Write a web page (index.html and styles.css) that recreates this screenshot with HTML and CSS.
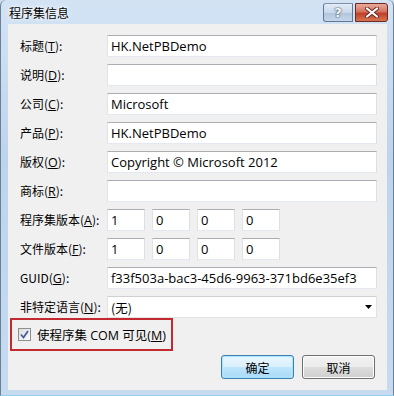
FILE: index.html
```html
<!DOCTYPE html>
<html lang="zh-CN">

<head>
    <meta charset="UTF-8">
    <meta name="viewport" content="width=device-width, initial-scale=1.0">
    <title>程序集信息</title>
    <link rel="stylesheet" href="styles.css">
</head>

<body>
    <div class="window">
        <!-- Title bar -->
        <div class="titlebar">
            <span class="title">程序集信息</span>
            <div class="caption-buttons">
                <span class="cap-btn help">?</span>
                <span class="cap-btn close">
                    <svg width="14" height="11" viewBox="0 0 14 11">
                        <path d="M2 1.5 L12 9.5 M12 1.5 L2 9.5" stroke="#6b2a22" stroke-width="4" stroke-linecap="round" />
                        <path d="M2 1.5 L12 9.5 M12 1.5 L2 9.5" stroke="#ffffff" stroke-width="2.2" stroke-linecap="round" />
                    </svg>
                </span>
            </div>
        </div>

        <!-- Dialog body -->
        <div class="client">
            <div class="form">
                <label>标题(<u>T</u>):</label>
                <div class="textbox">HK.NetPBDemo</div>

                <label>说明(<u>D</u>):</label>
                <div class="textbox"></div>

                <label>公司(<u>C</u>):</label>
                <div class="textbox">Microsoft</div>

                <label>产品(<u>P</u>):</label>
                <div class="textbox">HK.NetPBDemo</div>

                <label>版权(<u>O</u>):</label>
                <div class="textbox">Copyright © Microsoft 2012</div>

                <label>商标(<u>R</u>):</label>
                <div class="textbox"></div>

                <label>程序集版本(<u>A</u>):</label>
                <div class="version">
                    <div class="textbox">1</div>
                    <div class="textbox">0</div>
                    <div class="textbox">0</div>
                    <div class="textbox">0</div>
                </div>

                <label>文件版本(<u>F</u>):</label>
                <div class="version">
                    <div class="textbox">1</div>
                    <div class="textbox">0</div>
                    <div class="textbox">0</div>
                    <div class="textbox">0</div>
                </div>

                <label>GUID(<u>G</u>):</label>
                <div class="textbox">f33f503a-bac3-45d6-9963-371bd6e35ef3</div>

                <label>非特定语言(<u>N</u>):</label>
                <div class="combo">
                    <span>(无)</span>
                    <svg width="7" height="4" viewBox="0 0 7 4">
                        <path d="M0 0 H7 L3.5 4 Z" fill="#000" />
                    </svg>
                </div>
            </div>

            <!-- COM visible option (highlighted) -->
            <div class="com-box">
                <span class="checkbox">
                    <svg width="9" height="9" viewBox="0 0 9 9">
                        <path d="M1 4.5 L3.5 7.5 L8 1" fill="none" stroke="#4a5f97" stroke-width="1.8" />
                    </svg>
                </span>
                <span>使程序集 COM 可见(<u>M</u>)</span>
            </div>

            <div class="buttons">
                <button class="btn default">确定</button>
                <button class="btn">取消</button>
            </div>
        </div>
    </div>
</body>

</html>
```

FILE: styles.css
```css
/* Windows 7 style dialog */
body {
    margin: 0;
    font-family: "Open Sans", "Noto Sans CJK SC", sans-serif;
    font-size: 12px;
    color: #000;
    background: #c9dcf0;
}

.window {
    width: 394px;
    height: 396px;
    box-sizing: border-box;
    display: flex;
    flex-direction: column;
    padding: 0 6px 5px 7px;
    background: linear-gradient(to bottom, #d3e3f4 0%, #bed4ec 40%, #c6dbf0 100%);
    border-left: 1px solid #6d7f95;
    border-right: 1px solid #6d7f95;
    border-bottom: 1px solid #8fd0ee;
    border-radius: 6px 6px 0 0;
}

.titlebar {
    height: 25px;
    display: flex;
    align-items: flex-start;
    justify-content: space-between;
    margin-left: -6px;
    margin-right: -5px;
}

.title {
    font-family: "Noto Sans CJK SC", sans-serif;
    font-size: 12px;
    line-height: 14px;
    margin: 6px 0 0 7px;
    text-shadow: 0 0 6px #fff, 0 0 3px #fff;
}

.caption-buttons {
    display: flex;
    margin-top: 3px;
    margin-right: 4px;
}

.cap-btn {
    height: 17px;
    display: flex;
    align-items: center;
    justify-content: center;
    border: 1px solid #5f7896;
    border-top-color: #7c93ae;
}

.help {
    width: 28px;
    border-radius: 3px 0 0 3px;
    margin-right: 2px;
    background: linear-gradient(to bottom, #e4ecf6 0%, #c9d8ea 50%, #b0c4dc 51%, #c5d6ea 100%);
    font-family: "DejaVu Sans", sans-serif;
    font-size: 13px;
    font-weight: bold;
    color: #fff;
    text-shadow: 0 0 1px #2b4160, 0 0 2px #2b4160;
}

.close {
    width: 31px;
    border-color: #6b2a22;
    border-radius: 0 3px 3px 0;
    background: linear-gradient(to bottom, #e9a99b 0%, #d47461 45%, #c0402a 55%, #d8744f 100%);
}

.client {
    flex: 1;
    background: #f0f0f0;
    padding: 11px 12px 11px 12px;
    display: flex;
    flex-direction: column;
}

.form {
    display: grid;
    grid-template-columns: 87px 270px;
    grid-auto-rows: 22px;
    row-gap: 7px;
    align-items: center;
}

label {
    font-family: "Noto Sans CJK SC", sans-serif;
    white-space: nowrap;
}

label u,
.com-box u {
    font-family: "Open Sans", sans-serif;
    font-size: 12.5px;
}

.textbox {
    height: 22px;
    box-sizing: border-box;
    background: #fff;
    border: 1px solid;
    border-color: #abadb3 #dbdfe6 #e3e9ef #e2e3ea;
    padding: 0 3px;
    font-size: 13px;
    line-height: 20px;
    white-space: nowrap;
    overflow: hidden;
}

.version {
    display: flex;
    gap: 7px;
}

.version .textbox {
    width: 38px;
}

.combo {
    height: 22px;
    box-sizing: border-box;
    background: #fff;
    border: 1px solid #e3e3e3;
    border-top-color: #d0d0d0;
    padding: 0 4px 0 3px;
    display: flex;
    align-items: center;
    justify-content: space-between;
    font-family: "Noto Sans CJK SC", sans-serif;
    font-size: 12.5px;
}

.com-box {
    width: 163px;
    height: 33px;
    box-sizing: border-box;
    margin-left: -10px;
    border: 2px solid #c22a30;
    display: flex;
    align-items: center;
    padding-left: 6px;
    gap: 6px;
    font-family: "Open Sans", "Noto Sans CJK SC", sans-serif;
    font-size: 12.5px;
}

.checkbox {
    width: 13px;
    height: 13px;
    box-sizing: border-box;
    border: 1px solid #8e8f8f;
    background: linear-gradient(135deg, #dcdcdc, #fdfdfd);
    display: flex;
    align-items: center;
    justify-content: center;
}

.buttons {
    display: flex;
    justify-content: flex-end;
    gap: 8px;
    margin-top: 4px;
}

.btn {
    width: 73px;
    height: 24px;
    padding: 0;
    font-family: "Noto Sans CJK SC", sans-serif;
    font-size: 12px;
    color: #000;
    border: 1px solid #707070;
    border-radius: 3px;
    background: linear-gradient(to bottom, #f2f2f2 0%, #ebebeb 50%, #dddddd 51%, #cfcfcf 100%);
    box-shadow: inset 0 0 0 1px #fcfcfc;
}

.btn.default {
    border-color: #3c7fb1;
    background: linear-gradient(to bottom, #eaf6fd 0%, #d9f0fc 50%, #bee6fd 51%, #a7d9f5 100%);
    box-shadow: inset 0 0 0 1px #48d0ff40, inset 0 0 2px 1px #c8eeff;
}
```
